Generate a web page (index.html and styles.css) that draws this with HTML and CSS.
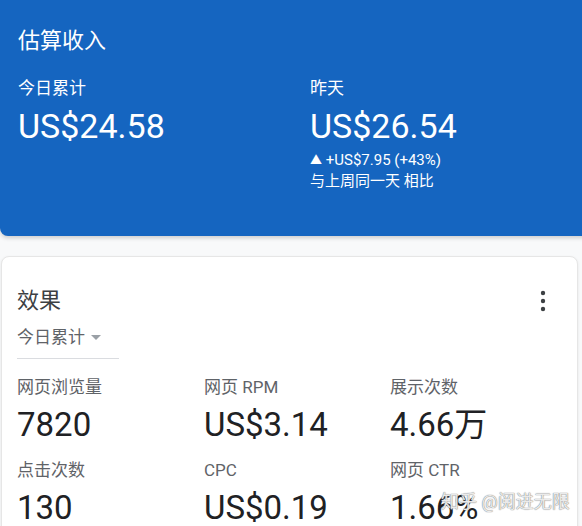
FILE: index.html
```html
<!DOCTYPE html>
<html lang="zh-CN">
<head>
    <meta charset="UTF-8">
    <meta name="viewport" content="width=device-width, initial-scale=1.0">
    <title>估算收入</title>
    <link rel="stylesheet" href="styles.css">
</head>
<body>
    <div class="earnings">
        <h2 class="card-title">估算收入</h2>
        <div class="earnings-cols">
            <div>
                <div class="earn-label">今日累计</div>
                <div class="earn-value">US$24.58</div>
            </div>
            <div>
                <div class="earn-label">昨天</div>
                <div class="earn-value">US$26.54</div>
                <div class="earn-delta"><span class="arrow">▲</span> +US$7.95 (+43%)</div>
                <div class="earn-note">与上周同一天 相比</div>
            </div>
        </div>
    </div>

    <div class="card">
        <div class="card-head">
            <h2 class="card-title dark">效果</h2>
            <svg class="more" width="24" height="24" viewBox="0 0 24 24">
                <circle cx="12" cy="4" r="2.2"/>
                <circle cx="12" cy="12" r="2.2"/>
                <circle cx="12" cy="20" r="2.2"/>
            </svg>
        </div>
        <div class="dropdown">今日累计 <span class="caret"></span></div>

        <div class="metrics">
            <div class="metric">
                <div class="metric-label">网页浏览量</div>
                <div class="metric-value">7820</div>
            </div>
            <div class="metric">
                <div class="metric-label">网页 RPM</div>
                <div class="metric-value">US$3.14</div>
            </div>
            <div class="metric">
                <div class="metric-label">展示次数</div>
                <div class="metric-value">4.66万</div>
            </div>
            <div class="metric">
                <div class="metric-label">点击次数</div>
                <div class="metric-value">130</div>
            </div>
            <div class="metric">
                <div class="metric-label">CPC</div>
                <div class="metric-value">US$0.19</div>
            </div>
            <div class="metric">
                <div class="metric-label">网页 CTR</div>
                <div class="metric-value">1.66%</div>
            </div>
        </div>

        <!-- watermark from the source screenshot -->
        <div class="watermark">知乎 @阅进无限</div>
    </div>
</body>
</html>
```

FILE: styles.css
```css
body {
    margin: 0;
    background-color: #f8f9fa;
    font-family: Roboto, "Noto Sans CJK SC", sans-serif;
    overflow: hidden;
    height: 526px;
}

.earnings {
    background-color: #1565c0;
    color: white;
    margin-right: -10px;
    height: 236px;
    box-sizing: border-box;
    padding: 28px 18px 0 18px;
    border-radius: 0 0 8px 8px;
    box-shadow: 0 2px 4px rgba(0, 0, 0, 0.18);
}

.card-title {
    margin: 0;
    font-size: 22px;
    font-weight: normal;
    line-height: 26px;
}

.earnings-cols {
    display: grid;
    grid-template-columns: 292px 1fr;
    margin-top: 22px;
}

.earn-label {
    font-size: 17px;
    line-height: 24px;
}

.earn-value {
    font-size: 34px;
    line-height: 40px;
    margin-top: 6px;
}

.earn-delta,
.earn-note {
    font-size: 15px;
    line-height: 20px;
}

.earn-delta {
    margin-top: 4px;
}

.arrow {
    font-size: 12px;
}

.card {
    position: relative;
    background-color: white;
    margin: 20px 4px 0 1px;
    border: 1px solid #e6e6e6;
    border-radius: 8px;
    box-shadow: 0 1px 3px rgba(0, 0, 0, 0.08);
    padding: 30px 18px 40px 15px;
}

.card-head {
    display: flex;
    justify-content: space-between;
    align-items: center;
}

.card-title.dark {
    color: #3c4043;
    line-height: 28px;
}

.more {
    fill: #3c4043;
    margin-right: 4px;
}

.dropdown {
    width: 102px;
    box-sizing: border-box;
    margin-top: 10px;
    padding-bottom: 9px;
    border-bottom: 1px solid #dadce0;
    font-size: 17px;
    line-height: 24px;
    color: #5f6368;
    display: flex;
    align-items: center;
    gap: 6px;
}

.caret {
    width: 0;
    height: 0;
    border-left: 5px solid transparent;
    border-right: 5px solid transparent;
    border-top: 5px solid #9aa0a6;
}

.metrics {
    display: grid;
    grid-template-columns: 187px 186px 1fr;
    row-gap: 13px;
    margin-top: 16px;
}

.metric-label {
    font-size: 17px;
    line-height: 24px;
    color: #5f6368;
}

.metric-value {
    font-size: 33px;
    line-height: 40px;
    margin-top: 6px;
    color: #202124;
}

.watermark {
    position: absolute;
    left: 439px;
    top: 230px;
    font-size: 18px;
    color: rgba(255, 255, 255, 0.85);
    text-shadow: 0 0 1px #777, 0 0 1px #999;
}
```
